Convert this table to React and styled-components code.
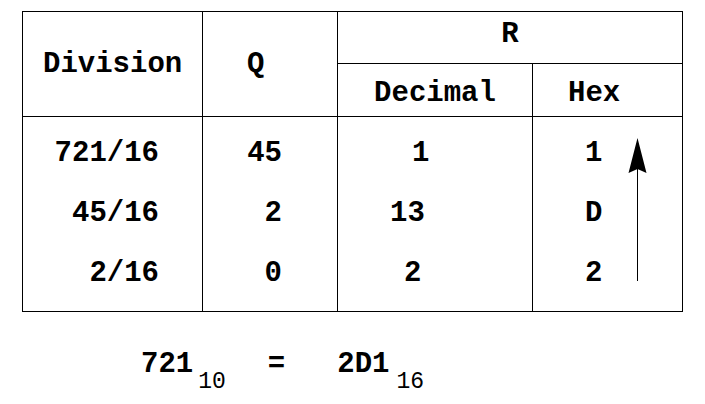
import React from 'react';
import styled, { createGlobalStyle } from 'styled-components';

const GlobalStyle = createGlobalStyle`
  html, body {
    margin: 0;
    background: #fff;
  }
  body {
    font-family: "Liberation Mono", "Courier New", monospace;
    color: #000;
  }
`;

const Figure = styled.div`
  width: 705px;
  height: 404px;
  box-sizing: border-box;
  padding: 11px 0 0 22px;
`;

const Table = styled.div`
  display: grid;
  grid-template-columns: 180px 135px 195px 150px;
  grid-template-rows: 52px 53px 195px;
  width: max-content;
  border-top: 1px solid #000;
  border-left: 1px solid #000;
  font-size: 29px;
  font-weight: 700;
`;

const Cell = styled.div`
  grid-column: ${(p) => p.$col};
  grid-row: ${(p) => p.$row};
  box-sizing: border-box;
  border-right: 1px solid #000;
  border-bottom: 1px solid #000;
  display: flex;
  align-items: ${(p) => p.$valign || 'center'};
  justify-content: ${(p) => p.$justify || 'flex-start'};
  padding: ${(p) => p.$pad || '0'};
`;

const Column = styled.div`
  display: flex;
  flex-direction: column;
  align-items: ${(p) => (p.$right ? 'flex-end' : 'flex-start')};
  width: ${(p) => (p.$right ? '100%' : 'auto')};
  line-height: 60px;
`;

const Value = styled.span`
  padding-left: ${(p) => p.$indent || 0}px;
  white-space: pre;
`;

const Arrow = styled.svg`
  display: block;
  margin: 14px 0 0 26px;
  flex: none;
`;

const Equation = styled.div`
  display: flex;
  align-items: baseline;
  margin: 38px 0 0 119px;
  font-size: 29px;
  font-weight: 700;
  line-height: 1;
`;

const Num = styled.span`
  margin-left: ${(p) => p.$gap || 0}px;
`;

const Sub = styled.span`
  margin-left: ${(p) => p.$gap || 0}px;
  font-size: 23px;
  font-weight: 400;
  position: relative;
  top: 16px;
`;

const rows = [
  { div: '721/16', q: '45', dec: '1', decIndent: 74, hex: '1' },
  { div: '45/16', q: '2', dec: '13', decIndent: 52, hex: 'D' },
  { div: '2/16', q: '0', dec: '2', decIndent: 66, hex: '2' },
];

const UpArrow = () => (
  <Arrow width="20" height="144" viewBox="0 0 20 144">
    <line x1="9.5" y1="30" x2="9.5" y2="143" stroke="#000" strokeWidth="1" />
    <polygon points="9.5,0 0.5,35 9.5,31 18.5,35" fill="#000" />
  </Arrow>
);

const App = () => (
  <>
    <GlobalStyle />
    <Figure>
      <Table>
        <Cell $col="1" $row="1 / 3" $pad="0 0 0 20px">Division</Cell>
        <Cell $col="2" $row="1 / 3" $pad="0 0 0 44px">Q</Cell>
        <Cell $col="3 / 5" $row="1" $justify="center" $pad="0 0 6px 0">R</Cell>
        <Cell $col="3" $row="2" $justify="center" $pad="6px 0 0 0">Decimal</Cell>
        <Cell $col="4" $row="2" $pad="6px 0 0 35px">Hex</Cell>

        <Cell $col="1" $row="3" $valign="flex-start" $pad="7px 43px 0 0">
          <Column $right>
            {rows.map((r) => (
              <Value key={r.div}>{r.div}</Value>
            ))}
          </Column>
        </Cell>
        <Cell $col="2" $row="3" $valign="flex-start" $pad="7px 55px 0 0">
          <Column $right>
            {rows.map((r) => (
              <Value key={r.div}>{r.q}</Value>
            ))}
          </Column>
        </Cell>
        <Cell $col="3" $row="3" $valign="flex-start" $pad="7px 0 0 0">
          <Column>
            {rows.map((r) => (
              <Value key={r.div} $indent={r.decIndent}>
                {r.dec}
              </Value>
            ))}
          </Column>
        </Cell>
        <Cell $col="4" $row="3" $valign="flex-start" $pad="7px 0 0 52px">
          <Column>
            {rows.map((r) => (
              <Value key={r.div}>{r.hex}</Value>
            ))}
          </Column>
          <UpArrow />
        </Cell>
      </Table>

      <Equation>
        <Num>721</Num>
        <Sub $gap={5}>10</Sub>
        <Num $gap={42}>=</Num>
        <Num $gap={52}>2D1</Num>
        <Sub $gap={7}>16</Sub>
      </Equation>
    </Figure>
  </>
);

export default App;
